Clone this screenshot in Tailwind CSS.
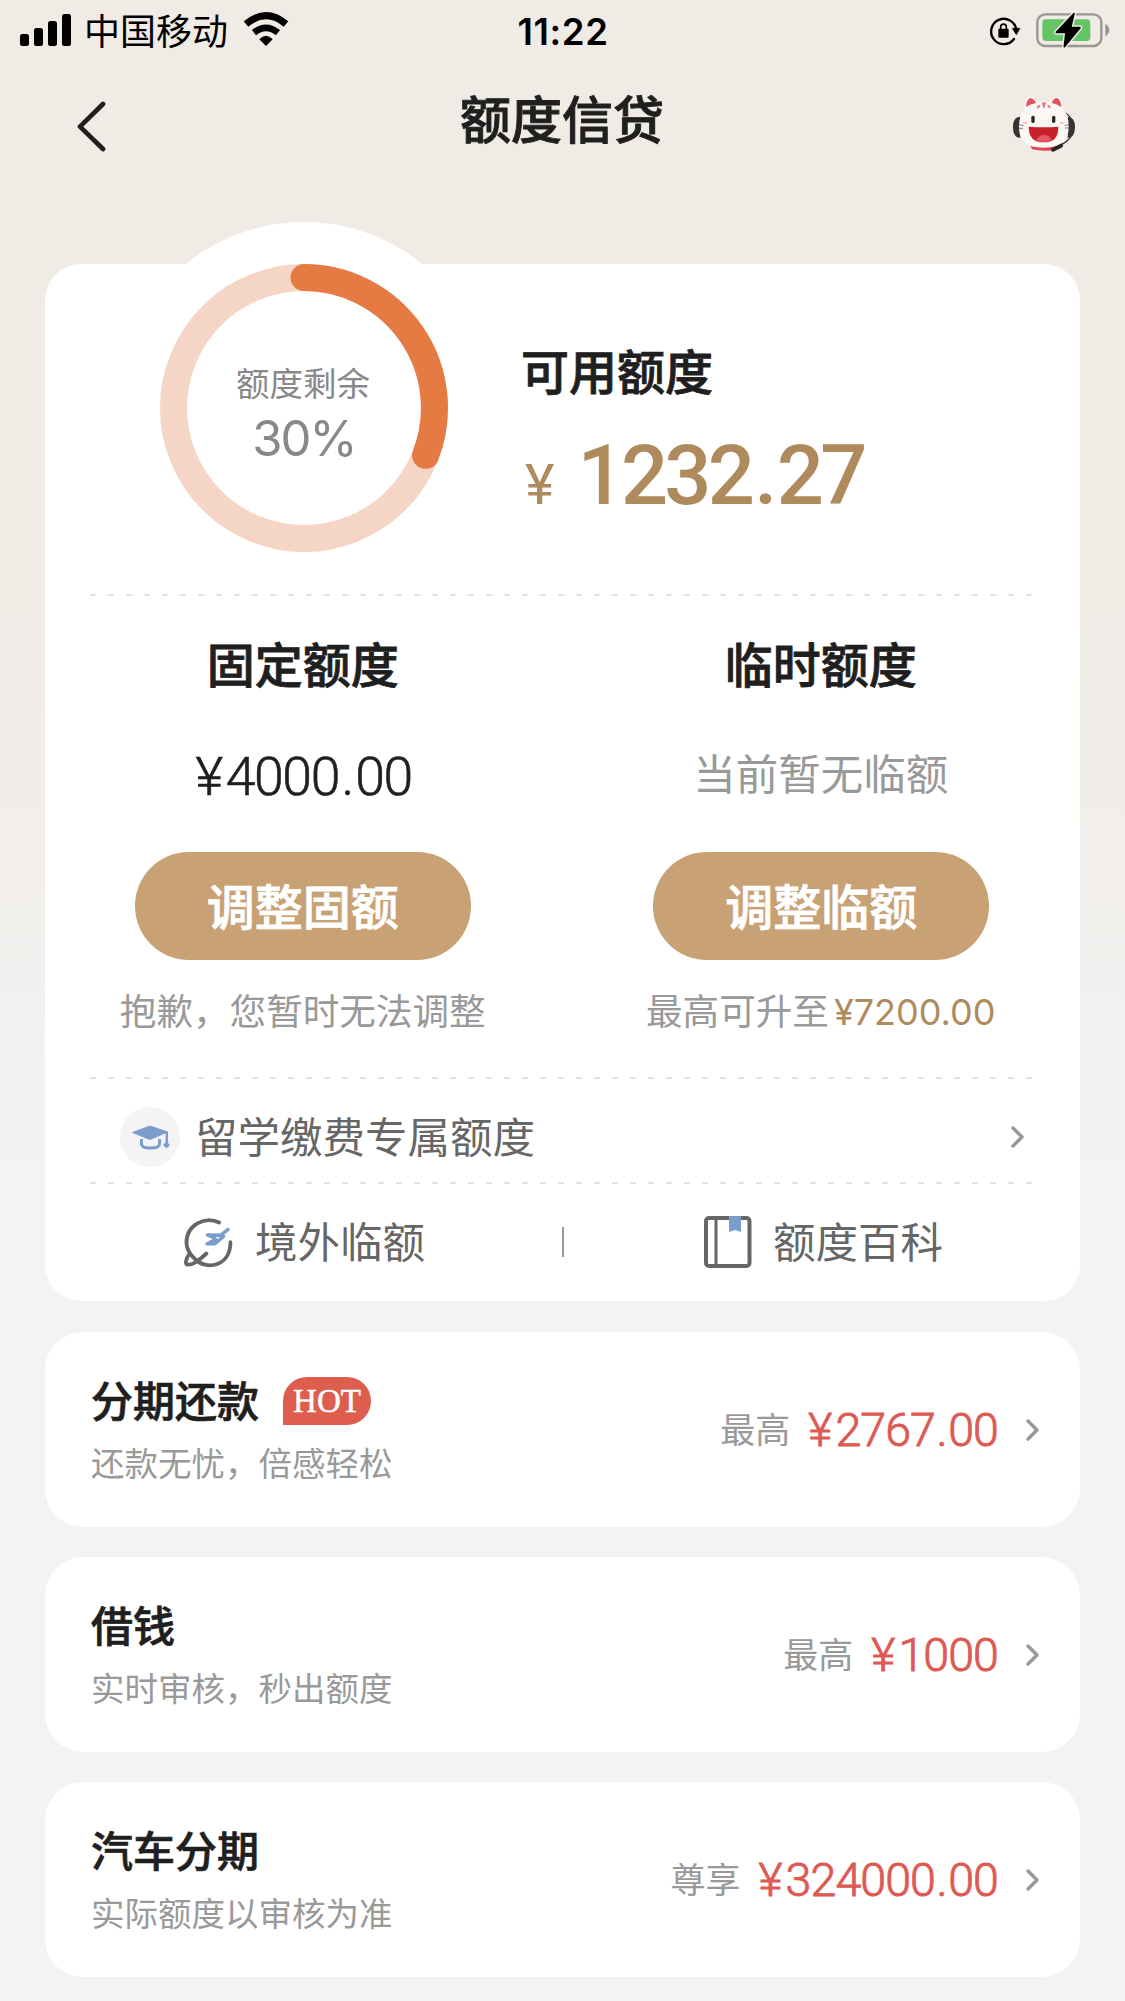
<!DOCTYPE html>
<html lang="zh-CN">
<head>
<meta charset="utf-8">
<title>额度信贷</title>
<script src="https://cdn.jsdelivr.net/npm/@tailwindcss/browser@4"></script>
</head>
<body class="w-[1125px] h-[2001px] overflow-hidden bg-linear-to-b from-[#f0ebe5] from-30% via-[#f3f3f3] via-58% to-[#f2f3f5] to-68% font-['Noto_Sans_CJK_SC',sans-serif] text-[#1f1f1f] leading-none whitespace-nowrap">
  <!-- Status bar -->
  <header class="h-[60px] flex items-center justify-between pl-[20px] pr-[15px] text-black">
    <div class="w-[480px] flex items-center">
      <svg class="w-[51px] h-[32px]" viewBox="0 0 51 32"><rect y="20" width="9" height="12" rx="2.500"/><rect x="14" y="14" width="9" height="18" rx="2.500"/><rect x="28" y="7" width="9" height="25" rx="2.500"/><rect x="42" width="9" height="32" rx="2.500"/></svg>
      <span class="ml-[13px] -mt-[3px] text-[36px]">中国移动</span>
      <svg class="ml-[15px] -mt-[2px] w-[46px] h-[34px]" viewBox="729 37 138 102"><path d="M738 73Q798 23 858 73" fill="none" stroke="#000" stroke-width="21"/><path d="M762 99Q798 70 834 99" fill="none" stroke="#000" stroke-width="20"/><path d="M778 119Q798 98 818 119L798 139Z"/></svg>
    </div>
    <span class="mt-[4px] -ml-[4px] font-['Inter',sans-serif] font-semibold text-[36.500px] tracking-[0.600px]">11:22</span>
    <div class="w-[480px] flex items-center justify-end gap-[15px]">
      <svg class="mt-[2px] w-[33px] h-[32px]" viewBox="116 48 99 96"><path d="M194 120A38 38 0 1 1 201 92" fill="none" stroke="#000" stroke-width="7" stroke-linecap="round"/><path d="M189 88H212L201 107Z" stroke="#000" stroke-width="2" stroke-linejoin="round"/><rect x="147" y="89" width="31" height="27" rx="3"/><path d="M154 90V84a8.500 8.500 0 0 1 17 0V90" fill="none" stroke="#000" stroke-width="5"/></svg>
      <svg class="w-[74px] h-[36px]" viewBox="257 36 222 108"><rect x="261" y="43" width="192" height="95" rx="24" fill="none" stroke="#9a9691" stroke-width="7"/><path d="M465 71Q477 78 477 90T465 109Z" fill="#9a9691"/><rect x="276" y="58" width="144" height="65" rx="11" fill="#65c466"/><path d="M371 41L318 97H347L342 140L389 83H361Z" fill="#000" stroke="#f0ebe5" stroke-width="14" stroke-linejoin="round"/><path d="M371 41L318 97H347L342 140L389 83H361Z" fill="#000" stroke="#000" stroke-width="5" stroke-linejoin="round"/></svg>
    </div>
  </header>

  <!-- Title bar -->
  <nav class="h-[204px] flex items-start justify-between pt-[34px] pl-[77px] pr-[48px]">
    <svg class="mt-[7px] w-[30px] h-[51px]" viewBox="231 302 90 153"><path d="M309 311L240 379L309 446" fill="none" stroke="#1f1f1f" stroke-width="14" stroke-linecap="round" stroke-linejoin="round"/></svg>
    <h1 class="ml-[5px] -mt-[2px] text-[51px] font-medium [-webkit-text-stroke:0.900px]">额度信贷</h1>
    <svg class="mt-px w-[65px] h-[60px]" viewBox="186 285 195 180">
      <path d="M241 438Q281 446 319 437L315 449Q281 456 247 448Z" fill="#dc4555"/>
      <path d="M210 350Q188 352 189 383T211 413ZM353 350Q376 352 375 383T353 413Z" fill="#363436"/>
      <path d="M347 339Q361 349 365 360" fill="none" stroke="#363436" stroke-width="4"/>
      <path d="M207 382C207 352 217 335 223 324Q225 294 240 290Q254 291 261 307Q282 302 302 307Q309 291 323 291Q336 296 338 323C350 337 356 352 356 382C356 425 325 443 281 443S207 425 207 382Z" fill="#fbf7f5"/>
      <path d="M228 320Q230 296 242 294Q254 298 258 309Q241 312 228 320ZM305 309Q311 294 321 294Q332 298 334 321Q322 312 305 309Z" fill="#df5260"/>
      <path d="M275 309Q282 305 288 309L282 328ZM259 325Q264 311 272 317L267 323ZM303 325Q299 311 291 317L296 323Z" fill="#e47780"/>
      <rect x="244" y="347" width="10" height="22" rx="5" fill="#29272a"/><rect x="306" y="347" width="10" height="22" rx="5" fill="#29272a"/>
      <path d="M219 369H231M330 369H342" stroke="#f1b7b4" stroke-width="5"/>
      <path d="M205 373L221 377M205 385H219M360 373L344 377M360 384H345" stroke="#44404a" stroke-width="2"/>
      <path d="M236 380Q281 384 325 380Q326 427 281 427T236 380Z" fill="#c82127"/><path d="M258 422Q266 405 281 404T306 421Q281 431 258 422Z" fill="#df5864"/>
      <path d="M363 409Q354 424 330 436" fill="none" stroke="#363436" stroke-width="4"/><path d="M309 449L333 437" stroke="#29272a" stroke-width="12" stroke-linecap="round"/>
    </svg>
  </nav>

  <main class="px-[45px]">
    <!-- Credit overview -->
    <section class="relative h-[1037px] rounded-[36px] bg-white">
      <div class="absolute left-[72px] -top-[42px] w-[374px] h-[187px] rounded-t-full bg-white"></div>
      <div class="relative h-[330px] flex">
        <div class="ml-[115px] size-[288px] grid place-items-center">
          <svg class="col-start-1 row-start-1 size-[288px]" viewBox="0 0 288 288" fill="none" stroke-width="27"><circle cx="144" cy="144" r="130.500" stroke="#f5d5c6"/><path d="M144 13.500A130.500 130.500 0 0 1 265.600 191.300" stroke="#e57a42" stroke-linecap="round"/></svg>
          <div class="col-start-1 row-start-1 flex flex-col items-center text-[#888]">
            <span class="mt-[12px] -ml-[2px] text-[33.500px]">额度剩余</span>
            <span class="mt-[16px] font-['Inter',sans-serif] text-[49px] tracking-[-2px]">30%</span>
          </div>
        </div>
        <div class="ml-[73px] pt-[81px]">
          <h2 class="text-[48px] font-medium [-webkit-text-stroke:0.800px]">可用额度</h2>
          <p class="mt-[41px] pl-[4px] flex items-baseline font-['Roboto',sans-serif] text-[#af8a5d]"><span class="text-[56px]">¥</span><span class="ml-[23px] text-[83px] font-medium tracking-[-3.700px]">1232<span class="mx-[3px]">.</span>27</span></p>
        </div>
      </div>
      <div class="ml-[45px] w-[943px] h-[2px] mb-px bg-[repeating-linear-gradient(90deg,#e3e3e3_0_6px,transparent_6px_18px)]"></div>

      <div class="h-[480px] grid grid-cols-2 text-center">
        <div class="-ml-[2px] flex flex-col items-center pt-[41px]">
          <h3 class="text-[48px] font-medium [-webkit-text-stroke:0.800px]">固定额度</h3>
          <p class="mt-[62px] ml-[2px] h-[54px] font-['Roboto',sans-serif] font-light text-[53.500px] tracking-[-1.400px] leading-[57px] [-webkit-text-stroke:0.600px]"><span class="mr-[4px]">¥</span>4000<span class="mx-[2.500px]">.</span>00</p>
          <button class="mt-[50px] w-[336px] h-[108px] pb-[4px] rounded-full bg-[#c8a174] text-white text-[48px] font-medium [-webkit-text-stroke:0.800px]">调整固额</button>
          <p class="mt-[32px] text-[36.600px] text-[#999]">抱歉，您暂时无法调整</p>
        </div>
        <div class="flex flex-col items-center pt-[41px]">
          <h3 class="-ml-px text-[48px] font-medium [-webkit-text-stroke:0.800px]">临时额度</h3>
          <p class="mt-[62px] -ml-px h-[54px] text-[42.500px] text-[#999] leading-[48px]">当前暂无临额</p>
          <button class="mt-[50px] w-[336px] h-[108px] pb-[4px] rounded-full bg-[#c8a174] text-white text-[48px] font-medium [-webkit-text-stroke:0.800px]">调整临额</button>
          <p class="mt-[32px] -ml-px flex items-baseline text-[36.600px] text-[#999]">最高可升至<span class="ml-[5px] font-['Inter',sans-serif] text-[36px] text-[#af8a5d]">¥7200.00</span></p>
        </div>
      </div>
      <div class="ml-[45px] w-[943px] h-[2px] mb-px bg-[repeating-linear-gradient(90deg,#e3e3e3_0_6px,transparent_6px_18px)]"></div>

      <a class="h-[102px] flex items-center pt-[12px] pl-[75px] pr-[55px] text-[42.500px] text-[#666]">
        <svg class="mr-[15px] size-[60px]" viewBox="0 0 60 60"><circle cx="30" cy="30" r="30" fill="#f4f4f4"/><path d="M12.500 25.500L30 19L47.500 25L30 32.500Z" fill="#7b9dcb" stroke="#7b9dcb" stroke-linejoin="round"/><path d="M21.500 32V37Q21.500 41 30.500 41T39.500 37V32" fill="none" stroke="#7b9dcb" stroke-width="3"/><path d="M46.800 25V37" stroke="#7b9dcb" stroke-width="2.500"/><path d="M46.500 35L49.500 38L46.500 41L43.500 38Z" fill="#7b9dcb" stroke="#7b9dcb" stroke-linejoin="round"/></svg>
        <span class="flex-1 -mt-[3px]">留学缴费专属额度</span>
        <svg class="w-[15px] h-[24px]" viewBox="0 0 15 24" fill="none" stroke="#999" stroke-width="3.500" stroke-linecap="round" stroke-linejoin="round"><path d="M3 3L12 12L3 21"/></svg>
      </a>
      <div class="ml-[45px] w-[943px] h-[2px] mb-px bg-[repeating-linear-gradient(90deg,#e3e3e3_0_6px,transparent_6px_18px)]"></div>

      <div class="h-[114px] flex items-center text-[42.500px] text-[#666]">
        <a class="w-[517px] flex items-center pl-[139px] gap-[19px]">
          <svg class="w-[52px] h-[54px]" viewBox="423 466 151 157" fill="none" stroke="#666" stroke-width="11" stroke-linecap="round" stroke-linejoin="round"><path d="M525 488C485 468 429 494 430 548C431 566 441 582 456 595C490 629 558 614 558 545"/><path d="M438 580C429 592 425 609 432 610C449 613 466 598 488 578"/><path d="M551 508L529 525M529 525L491 524L508 531L516 538M529 525L538 528L512 550L490 550L512 538" stroke="#7b9dcb" stroke-width="10"/></svg>
          <span class="-mt-[4px]">境外临额</span>
        </a>
        <i class="w-[2px] h-[30px] bg-[#999]"></i>
        <a class="flex items-center pl-[140px] gap-[21px]">
          <svg class="w-[48px] h-[52px]" viewBox="0 0 48 52" fill="none" stroke="#666" stroke-width="4"><rect x="2" y="2" width="43.500" height="48" rx="3"/><path d="M12 2V50" stroke-width="3"/><path d="M25 0H37V16L31 14L25 16Z" fill="#7b9dcb" stroke="none"/></svg>
          <span class="-mt-[4px]">额度百科</span>
        </a>
      </div>
    </section>

    <!-- Products -->
    <section class="mt-[31px] flex flex-col gap-[30px]">
      <a class="h-[195px] flex items-center rounded-[38px] bg-white pl-[46px] pr-[40px]">
        <div class="flex-1 -mt-[3px]">
          <div class="h-[48px] flex items-center"><h3 class="-mt-[4px] text-[42px] font-medium [-webkit-text-stroke:0.700px]">分期还款</h3><span class="ml-[24px] w-[88px] h-[48px] rounded-tl-[24px] rounded-r-[24px] bg-[#dd5d4f] text-center font-['Liberation_Serif',serif] text-[33px] leading-[49px] text-white [-webkit-text-stroke:0.500px]">HOT</span></div>
          <p class="mt-[20px] text-[33.500px] text-[#999]">还款无忧，倍感轻松</p>
        </div>
        <span class="-mt-[4px] text-[35px] text-[#999]">最高</span>
        <span class="ml-[18px] mt-[2px] font-['Roboto',sans-serif] font-light text-[46.500px] tracking-[-0.900px] text-[#dd5a54] [-webkit-text-stroke:0.900px]"><span class="mr-[4px]">¥</span>2767<span class="mx-[1.500px]">.</span>00</span>
        <svg class="ml-[27px] w-[15px] h-[24px]" viewBox="0 0 15 24" fill="none" stroke="#999" stroke-width="3.500" stroke-linecap="round" stroke-linejoin="round"><path d="M3 3L12 12L3 21"/></svg>
      </a>
      <a class="h-[195px] flex items-center rounded-[38px] bg-white pl-[46px] pr-[40px]">
        <div class="flex-1 -mt-[3px]">
          <div class="h-[48px] flex items-center"><h3 class="-mt-[4px] text-[42px] font-medium [-webkit-text-stroke:0.700px]">借钱</h3></div>
          <p class="mt-[20px] text-[33.500px] text-[#999]">实时审核，秒出额度</p>
        </div>
        <span class="-mt-[4px] text-[35px] text-[#999]">最高</span>
        <span class="ml-[18px] mt-[2px] font-['Roboto',sans-serif] font-light text-[46.500px] tracking-[-0.900px] text-[#dd5a54] [-webkit-text-stroke:0.900px]"><span class="mr-[4px]">¥</span>1000</span>
        <svg class="ml-[27px] w-[15px] h-[24px]" viewBox="0 0 15 24" fill="none" stroke="#999" stroke-width="3.500" stroke-linecap="round" stroke-linejoin="round"><path d="M3 3L12 12L3 21"/></svg>
      </a>
      <a class="h-[195px] flex items-center rounded-[38px] bg-white pl-[46px] pr-[40px]">
        <div class="flex-1 -mt-[3px]">
          <div class="h-[48px] flex items-center"><h3 class="-mt-[4px] text-[42px] font-medium [-webkit-text-stroke:0.700px]">汽车分期</h3></div>
          <p class="mt-[20px] text-[33.500px] text-[#999]">实际额度以审核为准</p>
        </div>
        <span class="-mt-[4px] text-[35px] text-[#999]">尊享</span>
        <span class="ml-[18px] mt-[2px] font-['Roboto',sans-serif] font-light text-[46.500px] tracking-[-0.900px] text-[#dd5a54] [-webkit-text-stroke:0.900px]"><span class="mr-[4px]">¥</span>324000<span class="mx-[1.500px]">.</span>00</span>
        <svg class="ml-[27px] w-[15px] h-[24px]" viewBox="0 0 15 24" fill="none" stroke="#999" stroke-width="3.500" stroke-linecap="round" stroke-linejoin="round"><path d="M3 3L12 12L3 21"/></svg>
      </a>
    </section>
  </main>
</body>
</html>
